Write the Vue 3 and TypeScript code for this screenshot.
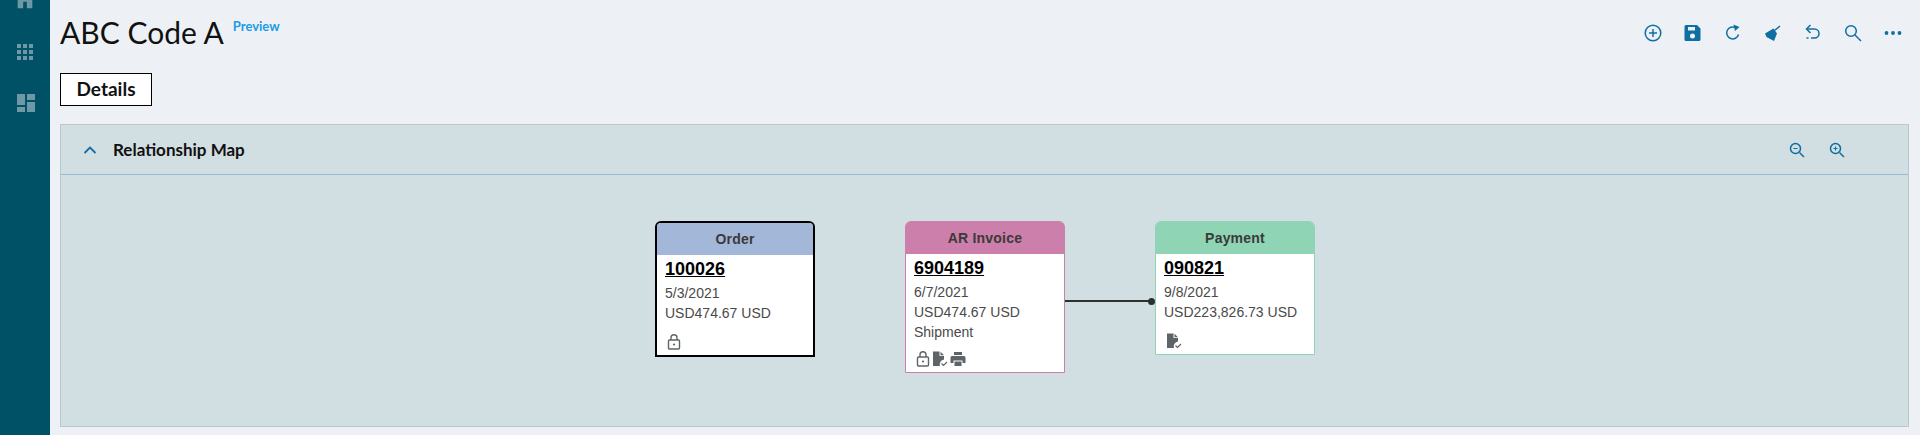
<script setup lang="ts">
type Doc = {
  type: string;
  number: string;
  lines: string[];
  icons: string[];
  cls: string;
};

const docs: Doc[] = [
  { type: "Order", number: "100026", lines: ["5/3/2021", "USD474.67 USD"], icons: ["lock"], cls: "order" },
  { type: "AR Invoice", number: "6904189", lines: ["6/7/2021", "USD474.67 USD", "Shipment"], icons: ["lock", "doc", "print"], cls: "invoice" },
  { type: "Payment", number: "090821", lines: ["9/8/2021", "USD223,826.73 USD"], icons: ["doc"], cls: "payment" },
];
</script>

<template>
  <div class="page">
    <aside class="side">
      <svg class="side-icon home" viewBox="0 0 24 24" width="22" height="22"><path d="M12 2 1 12h3v10h6v-7h4v7h6V12h3z" /></svg>
      <svg class="side-icon" viewBox="0 0 16 16" width="16" height="16">
        <path d="M0 0h4v4H0zM6 0h4v4H6zM12 0h4v4h-4zM0 6h4v4H0zM6 6h4v4H6zM12 6h4v4h-4zM0 12h4v4H0zM6 12h4v4H6zM12 12h4v4h-4z" />
      </svg>
      <svg class="side-icon" viewBox="0 0 18 18" width="18" height="18">
        <path d="M0 0h8v11H0zM10 0h8v6h-8zM10 8h8v10h-8zM0 13h8v5H0z" />
      </svg>
    </aside>

    <main class="main">
      <header class="top">
        <div class="heading">
          <h1>ABC Code A</h1>
          <span class="preview">Preview</span>
        </div>
        <div class="tools">
          <svg viewBox="0 0 18 18"><circle cx="9" cy="9" r="7.8" /><path d="M9 5v8M5 9h8" /></svg>
          <svg viewBox="0 0 18 18"><path class="fill" d="M2 1h11l3.500 3.500V15.500a1.500 1.500 0 0 1-1.500 1.500H2A1.500 1.500 0 0 1 .5 15.500v-13A1.500 1.500 0 0 1 2 1zM4 3v3.500h7V3zM8.500 9.500a2.500 2.500 0 1 0 0 5 2.500 2.500 0 0 0 0-5z" fill-rule="evenodd" /></svg>
          <svg viewBox="0 0 18 18"><path d="M14.500 10.500A6 6 0 1 1 11.500 3.600" /><path class="fill" d="M9.500.5l6 2.500-4.500 4z" /></svg>
          <svg viewBox="0 0 18 18"><path class="fill" d="M1 9.500 9.500 4.500 13 9.500 10 17 2.500 13z" /><path d="M10.500 6.500 16 2" /></svg>
          <svg viewBox="0 0 18 18"><path d="M6.500 1 2.500 5l4 4" /><path d="M3 5h7.500a4.500 4.500 0 0 1 0 9H7" /><path d="M2.500 14h2" /></svg>
          <svg viewBox="0 0 18 18"><circle cx="7" cy="7" r="5.300" /><path d="M11 11l6 6" /></svg>
          <svg viewBox="0 0 18 18"><circle class="fill" cx="2.500" cy="9" r="1.900" /><circle class="fill" cx="9" cy="9" r="1.900" /><circle class="fill" cx="15.500" cy="9" r="1.900" /></svg>
        </div>
      </header>

      <div class="tabs"><span class="tab">Details</span></div>

      <section class="panel">
        <div class="panel-head">
          <svg class="chevron" viewBox="0 0 14 8"><path d="M1.500 7 7 1.500 12.500 7" /></svg>
          <span class="panel-title">Relationship Map</span>
          <div class="zooms">
            <svg viewBox="0 0 16 16"><circle cx="6.500" cy="6.500" r="5" /><path d="M10.500 10.500 15 15" /><path class="thin" d="M4.500 6.500h4" /></svg>
            <svg viewBox="0 0 16 16"><circle cx="6.500" cy="6.500" r="5" /><path d="M10.500 10.500 15 15" /><path class="thin" d="M4.500 6.500h4M6.500 4.500v4" /></svg>
          </div>
        </div>

        <div class="map">
          <div v-for="d in docs" :key="d.number" class="card" :class="d.cls">
            <div class="card-type">{{ d.type }}</div>
            <div class="card-body">
              <a class="card-num">{{ d.number }}</a>
              <div v-for="l in d.lines" :key="l" class="card-line">{{ l }}</div>
              <div class="card-icons">
                <template v-for="i in d.icons" :key="i">
                  <svg v-if="i === 'lock'" viewBox="0 0 14 16" width="14" height="16">
                    <rect x="1.500" y="6" width="11" height="9" rx="1" fill="none" stroke="#5f6468" stroke-width="1.400" />
                    <path d="M4 6V3.800a3 3 0 0 1 6 0V6" fill="none" stroke="#5f6468" stroke-width="1.400" />
                    <circle cx="7" cy="10.500" r="1.100" fill="#5f6468" />
                  </svg>
                  <svg v-else-if="i === 'doc'" viewBox="0 0 16 16" width="16" height="16">
                    <path d="M1 .5h6.500v4.500H12v3.500A5 5 0 0 0 8 15H1z" fill="#5f6468" />
                    <path d="M8.500.8 12 4.200H8.500z" fill="#5f6468" />
                    <path d="M9.500 12.500l2 2 3.500-3.500" fill="none" stroke="#5f6468" stroke-width="1.200" />
                  </svg>
                  <svg v-else viewBox="0 0 16 16" width="16" height="16">
                    <path d="M4 1h8v3H4zM2 5h12a1.500 1.500 0 0 1 1.500 1.500V12H12.500V9.500h-9V12H.5V6.500A1.500 1.500 0 0 1 2 5zM4.500 10.500h7V15h-7z" fill="#5f6468" />
                  </svg>
                </template>
              </div>
            </div>
          </div>
          <div class="link"><i></i></div>
        </div>
      </section>
    </main>
  </div>
</template>

<style scoped>
.page {
  display: flex;
  width: 1920px;
  height: 435px;
  overflow: hidden;
  background: #edf1f5;
  font-family: "Lato", "Noto Sans", sans-serif;
}

.side {
  flex: 0 0 50px;
  background: #005066;
  display: flex;
  flex-direction: column;
  align-items: center;
}

.side-icon {
  fill: #6e98a5;
  margin-bottom: 34px;
}

.home {
  margin-top: -12px;
  margin-bottom: 34px;
}

.side-icon:last-child {
  margin-left: 2px;
}

.main {
  flex: 1;
  min-width: 0;
  padding: 0 11px 8px 10px;
  display: flex;
  flex-direction: column;
}

.top {
  height: 73px;
  display: flex;
  justify-content: space-between;
}

.heading {
  display: flex;
  align-items: flex-start;
}

h1 {
  margin: 10px 0 0;
  font-size: 30px;
  line-height: 44px;
  font-weight: 400;
  color: #111;
}

.preview {
  margin: 17px 0 0 9px;
  font-size: 13px;
  line-height: 18px;
  font-weight: 700;
  color: #1b9ae8;
}

.tools {
  display: flex;
  gap: 22px;
  margin: 24px 7px 0 0;
}

.tools svg {
  width: 18px;
  height: 18px;
  fill: none;
  stroke: #0f6fa3;
  stroke-width: 1.500;
}

.tools svg .fill {
  fill: #0f6fa3;
  stroke: none;
}

.tabs {
  height: 51px;
}

.tab {
  display: block;
  box-sizing: border-box;
  width: 92px;
  height: 33px;
  background: #fff;
  border: 1px solid #000;
  text-align: center;
  font-size: 19px;
  line-height: 30px;
  font-weight: 700;
  color: #111;
}

.panel {
  flex: 1;
  background: #d1dee2;
  border: 1px solid #b8c8cc;
  display: flex;
  flex-direction: column;
}

.panel-head {
  height: 49px;
  flex: none;
  border-bottom: 1px solid #8fc0d0;
  display: flex;
  align-items: center;
  padding-left: 22px;
}

.chevron {
  width: 14px;
  height: 8px;
  fill: none;
  stroke: #0f6fa3;
  stroke-width: 1.800;
  margin-right: 16px;
}

.panel-title {
  font-size: 17px;
  font-weight: 700;
  color: #111;
}

.zooms {
  margin-left: auto;
  margin-right: 63px;
  display: flex;
  gap: 24px;
}

.zooms svg {
  width: 16px;
  height: 16px;
  fill: none;
  stroke: #0f6fa3;
  stroke-width: 1.500;
}

.zooms svg .thin {
  stroke-width: 1;
}

.map {
  position: relative;
  flex: 1;
}

.card {
  position: absolute;
  top: 46px;
  box-sizing: border-box;
  width: 160px;
  background: #fff;
  border-radius: 6px 6px 0 0;
  font-family: "Liberation Sans", Arial, sans-serif;
  border: 1px solid;
  display: flex;
  flex-direction: column;
}

.order {
  left: 594px;
  height: 136px;
  border: 2px solid #000;
}

.invoice {
  left: 844px;
  height: 152px;
  border-color: #cc7fab;
}

.payment {
  left: 1094px;
  height: 134px;
  border-color: #90d4b6;
}

.card-type {
  height: 32px;
  text-align: center;
  font-size: 14px;
  font-weight: 700;
  line-height: 32px;
  color: #3a3a3a;
  letter-spacing: 0.2px;
  border-radius: 4px 4px 0 0;
}

.order .card-type {
  background: #a3b8d8;
}

.invoice .card-type {
  background: #cc7fab;
}

.payment .card-type {
  background: #90d4b6;
}

.card-body {
  flex: 1;
  display: flex;
  flex-direction: column;
  align-items: flex-start;
  padding: 4px 8px 5px;
}

.card-num {
  font-size: 18px;
  font-weight: 700;
  line-height: 20px;
  color: #000;
  text-decoration: underline;
  margin-bottom: 4px;
}

.card-line {
  font-size: 14px;
  line-height: 20px;
  color: #4a4a4a;
}

.card-icons {
  display: flex;
  align-items: center;
  gap: 2px;
  margin-top: auto;
  padding-left: 2px;
}

.link {
  position: absolute;
  left: 1004px;
  top: 125px;
  width: 87px;
  height: 2px;
  background: #2f2f2f;
}

.link i {
  position: absolute;
  right: -3px;
  top: -2.500px;
  width: 7px;
  height: 7px;
  border-radius: 50%;
  background: #2f2f2f;
}
</style>
